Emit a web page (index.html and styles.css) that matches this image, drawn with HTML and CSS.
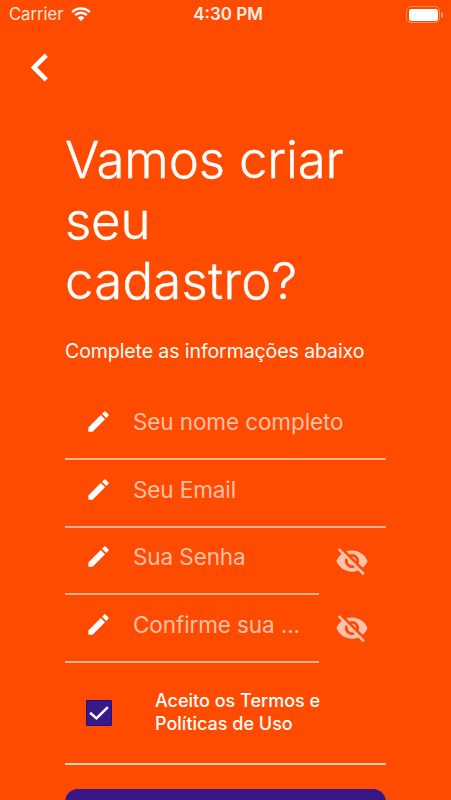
FILE: index.html
```
<!doctype html>
<html lang="pt-BR">
<head>
	<meta charset="UTF-8">
	<title>Cadastro</title>
	<link rel="stylesheet" href="styles.css">
</head>
<body>
	<svg class="hidden">
		<symbol id="edit" viewBox="0 0 24 24"><path d="M3 17.25V21h3.75L17.81 9.94l-3.75-3.75L3 17.25zM20.71 7.04a1 1 0 0 0 0-1.41l-2.34-2.34a1 1 0 0 0-1.41 0l-1.83 1.83 3.75 3.75 1.83-1.83z"/></symbol>
		<symbol id="eye-off" viewBox="0 0 24 24"><path d="M12 7c2.76 0 5 2.24 5 5 0 .65-.13 1.26-.36 1.83l2.92 2.92c1.51-1.26 2.7-2.89 3.43-4.75-1.73-4.39-6-7.5-11-7.5-1.4 0-2.74.25-3.98.7l2.16 2.16C10.74 7.13 11.35 7 12 7zM2 4.27l2.28 2.28.46.46C3.08 8.3 1.78 10.02 1 12c1.73 4.39 6 7.5 11 7.5 1.55 0 3.03-.3 4.38-.84l.42.42L19.73 22 21 20.73 3.27 3 2 4.27zM7.53 9.8l1.55 1.55c-.05.21-.08.43-.08.65 0 1.66 1.34 3 3 3 .22 0 .44-.03.65-.08l1.55 1.55c-.67.33-1.41.53-2.2.53-2.76 0-5-2.24-5-5 0-.79.2-1.53.53-2.2zm4.31-.78l3.15 3.15.02-.16c0-1.66-1.34-3-3-3l-.17.01z"/></symbol>
	</svg>
	<div class="status">
		<div class="carrier">
			<span>Carrier</span>
			<svg class="wifi" viewBox="0 0 20 14"><path d="M1.2 5.1a12.6 12.6 0 0 1 17.6 0M4.2 8.2a8.3 8.3 0 0 1 11.6 0"/><path class="dot" d="M6.6 10.7a4.9 4.9 0 0 1 6.8 0L10 14z"/></svg>
		</div>
		<div class="time">4:30 PM</div>
		<div class="power">
			<div class="battery"></div>
			<div class="tip"></div>
		</div>
	</div>
	<div class="nav">
		<svg class="back" viewBox="0 0 24 24"><path d="M15.41 7.41L14 6l-6 6 6 6 1.41-1.41L10.83 12z"/></svg>
	</div>
	<div class="content">
		<h1 class="title">Vamos criar<br>seu<br><span class="wide">cadastro?</span></h1>
		<p class="subtitle">Complete as informações abaixo</p>
		<form>
			<div class="row">
				<div class="field">
					<svg class="edit"><use href="#edit"/></svg>
					<span class="hint">Seu nome completo</span>
				</div>
			</div>
			<div class="row">
				<div class="field">
					<svg class="edit"><use href="#edit"/></svg>
					<span class="hint">Seu Email</span>
				</div>
			</div>
			<div class="row">
				<div class="field">
					<svg class="edit"><use href="#edit"/></svg>
					<span class="hint">Sua Senha</span>
				</div>
				<svg class="eye"><use href="#eye-off"/></svg>
			</div>
			<div class="row">
				<div class="field">
					<svg class="edit"><use href="#edit"/></svg>
					<span class="hint">Confirme sua ...</span>
				</div>
				<svg class="eye"><use href="#eye-off"/></svg>
			</div>
			<div class="terms">
				<div class="check">
					<svg viewBox="0 0 26 26"><path d="M3.4 12.8l6.8 6L22.6 6.6"/></svg>
				</div>
				<div class="label">Aceito os Termos e<br>Políticas de Uso</div>
			</div>
			<div class="button"></div>
		</form>
	</div>
</body>
</html>
```
FILE: styles.css
```
body{
	margin: 0;
	height: 800px;
	overflow: hidden;
	background: #ff4b00;
	color: white;
	font-family: Inter, "Liberation Sans", sans-serif;
}
svg{
	display: block;
	fill: white;
	flex-shrink: 0;
}
.hidden{
	display: none;
}
.status{
	display: grid;
	grid-template-columns: 1fr auto 1fr;
	align-items: center;
	height: 29px;
	padding: 0 8px 0 9px;
	font-size: 17px;
	line-height: 29px;
}
.carrier{
	display: flex;
	align-items: center;
	gap: 8px;
	font-size: 16.6px;
	color: #ffe4da;
}
.wifi{
	width: 20px;
	height: 14px;
	margin-top: -1px;
}
.wifi path{
	fill: none;
	stroke: white;
	stroke-width: 2.5;
}
.wifi .dot{
	fill: white;
	stroke: none;
}
.time{
	padding: 0 0 0 4px;
	font-weight: 600;
	color: #fff0ea;
}
.power{
	display: flex;
	justify-content: flex-end;
	align-items: center;
	gap: 1px;
}
.battery{
	box-sizing: border-box;
	width: 34px;
	height: 17px;
	padding: 1.5px;
	border: 1.5px solid #ff8a5c;
	border-radius: 5px;
	background: white content-box;
}
.tip{
	width: 2px;
	height: 6px;
	border-radius: 0 3px 3px 0;
	background: #ff9c74;
}
.nav{
	height: 77px;
	padding-left: 12px;
}
.back{
	width: 56px;
	height: 77px;
}
.content{
	width: 321px;
	margin-left: 65px;
	padding-top: 24px;
}
.title{
	margin: 0;
	font-size: 51px;
	line-height: 60.7px;
	font-weight: 300;
	letter-spacing: -0.2px;
	-webkit-text-stroke: 0.4px white;
}
.wide{
	letter-spacing: 0.2px;
}
.subtitle{
	margin: 27px 0 0;
	font-size: 19.5px;
	line-height: 24px;
	letter-spacing: -0.08px;
}
form{
	padding-top: 29.3px;
}
.row{
	display: flex;
	height: 67.6px;
}
.field{
	display: flex;
	flex: 1;
	align-items: center;
	box-sizing: border-box;
	padding: 0 0 7px 20px;
	border-bottom: 2px solid #ffb295;
}
.edit{
	width: 27px;
	height: 27px;
}
.hint{
	margin-left: 21px;
	font-size: 22.5px;
	letter-spacing: -0.1px;
	color: #ffc0a8;
	white-space: nowrap;
}
.eye{
	width: 34px;
	height: 34px;
	margin: 16px 17px 0 16px;
	fill: #ffc3ad;
}
.terms{
	display: flex;
	align-items: center;
	box-sizing: border-box;
	height: 102px;
	padding-left: 20.5px;
	border-bottom: 2px solid #ffd3c3;
}
.check{
	box-sizing: border-box;
	width: 26px;
	height: 26px;
	border: 1px solid #1c1287;
	border-radius: 1px;
	background: #3a1888;
}
.check svg{
	width: 24px;
	height: 24px;
}
.check path{
	fill: none;
	stroke: white;
	stroke-width: 2.8;
}
.label{
	margin-left: 43.5px;
	font-size: 18px;
	line-height: 22.5px;
	font-weight: 500;
}
.button{
	height: 60px;
	margin-top: 24.5px;
	border-radius: 13px;
	background: #371786;
}
```
